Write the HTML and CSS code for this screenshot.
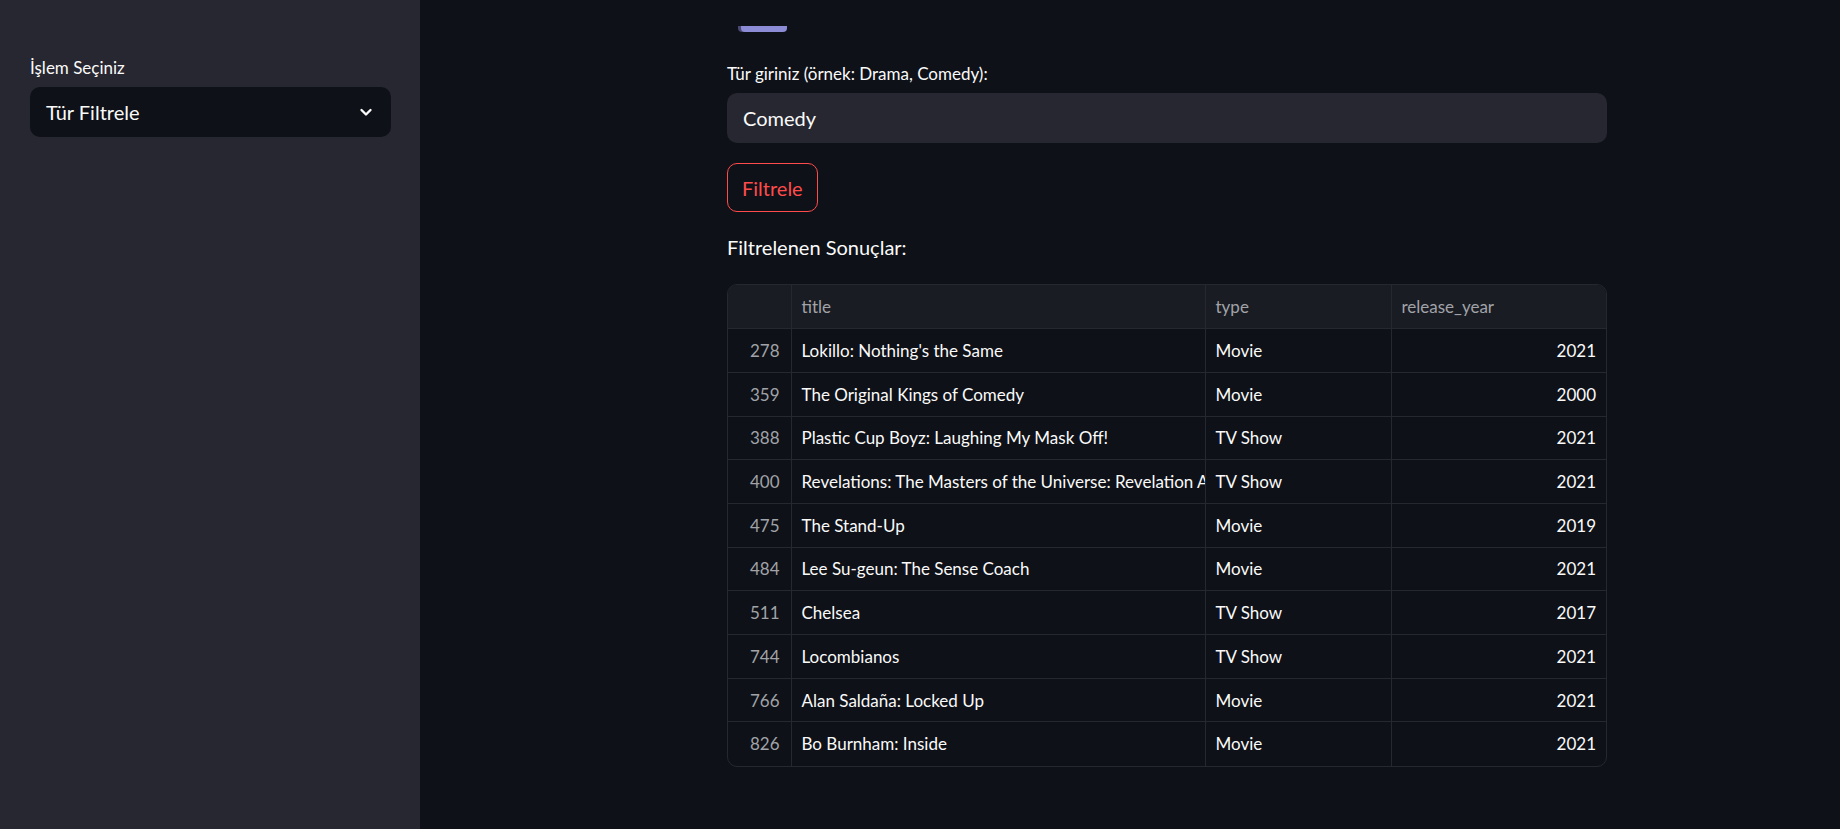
FILE: index.html
```html
<!DOCTYPE html>
<html lang="tr">
<head>
<meta charset="utf-8">
<title>Filtre</title>
<link rel="stylesheet" href="styles.css">
</head>
<body>
<div class="app">
  <aside class="sidebar">
    <label class="label">İşlem Seçiniz</label>
    <div class="select">
      <span>Tür Filtrele</span>
      <svg class="chev" width="14" height="14" viewBox="0 0 14 14"><polyline points="2.5,5 7,9.5 11.5,5" fill="none" stroke="#fafafa" stroke-width="2.4" stroke-linecap="round" stroke-linejoin="round"/></svg>
    </div>
  </aside>
  <main class="main">
    <div class="content">
      <div class="topbar"></div>
      <label class="label field-label">Tür giriniz (örnek: Drama, Comedy):</label>
      <div class="input">Comedy</div>
      <button class="btn">Filtrele</button>
      <p class="subhead">Filtrelenen Sonuçlar:</p>
      <div class="table-wrap">
        <table class="grid">
          <colgroup><col class="c-idx"><col class="c-title"><col class="c-type"><col class="c-year"></colgroup>
          <thead>
            <tr><th></th><th>title</th><th>type</th><th>release_year</th></tr>
          </thead>
          <tbody>
            <tr><td class="idx">278</td><td>Lokillo: Nothing's the Same</td><td>Movie</td><td class="num">2021</td></tr>
            <tr><td class="idx">359</td><td>The Original Kings of Comedy</td><td>Movie</td><td class="num">2000</td></tr>
            <tr><td class="idx">388</td><td>Plastic Cup Boyz: Laughing My Mask Off!</td><td>TV Show</td><td class="num">2021</td></tr>
            <tr><td class="idx">400</td><td><div class="clip">Revelations: The Masters of the Universe: Revelation Aftershow</div></td><td>TV Show</td><td class="num">2021</td></tr>
            <tr><td class="idx">475</td><td>The Stand-Up</td><td>Movie</td><td class="num">2019</td></tr>
            <tr><td class="idx">484</td><td>Lee Su-geun: The Sense Coach</td><td>Movie</td><td class="num">2021</td></tr>
            <tr><td class="idx">511</td><td>Chelsea</td><td>TV Show</td><td class="num">2017</td></tr>
            <tr><td class="idx">744</td><td>Locombianos</td><td>TV Show</td><td class="num">2021</td></tr>
            <tr><td class="idx">766</td><td>Alan Saldaña: Locked Up</td><td>Movie</td><td class="num">2021</td></tr>
            <tr><td class="idx">826</td><td>Bo Burnham: Inside</td><td>Movie</td><td class="num">2021</td></tr>
          </tbody>
        </table>
      </div>
    </div>
  </main>
</div>
</body>
</html>
```

FILE: styles.css
```css
* { box-sizing: border-box; }
html, body { margin: 0; padding: 0; height: 100%; }
body {
  background: #0e1117;
  color: #fafafa;
  font-family: "Lato", "Noto Sans", sans-serif;
  overflow: hidden;
}
.app { display: flex; height: 829px; }
.sidebar {
  width: 420px;
  flex: none;
  background: #262730;
  padding: 56px 29px 0 30px;
  display: flex;
  flex-direction: column;
}
.label {
  display: block;
  font-size: 17px;
  line-height: 24px;
  color: #fafafa;
}
.select {
  margin-top: 7px;
  height: 50px;
  background: #0e1117;
  border-radius: 10px;
  display: flex;
  align-items: center;
  justify-content: space-between;
  padding: 0 18px 0 16px;
  font-size: 20px;
}
.chev { display: block; }
.main { flex: 1; }
.content {
  width: 880px;
  margin-left: 307px;
  display: flex;
  flex-direction: column;
  align-items: flex-start;
}
.topbar {
  margin-left: 14px;
  width: 46px;
  height: 6px;
  margin-top: 26px;
  background: #8b8bd6;
  border-radius: 0 0 4px 4px;
  box-shadow: -3px 0 0 #4a4870;
}
.field-label { margin-top: 30px; }
.input {
  margin-top: 7px;
  width: 100%;
  height: 50px;
  background: #262730;
  border-radius: 10px;
  display: flex;
  align-items: center;
  padding-left: 16px;
  font-size: 20px;
}
.btn {
  margin-top: 20px;
  height: 49px;
  padding: 0 14px;
  background: #0e1117;
  border: 1px solid #ff4b4b;
  border-radius: 10px;
  color: #ff4b4b;
  font-family: inherit;
  font-size: 20px;
}
.subhead {
  margin: 20px 0 0;
  font-size: 20px;
  line-height: 30px;
}
.table-wrap {
  margin-top: 22px;
  width: 100%;
  border: 1px solid #26282f;
  border-radius: 10px;
  overflow: hidden;
}
.grid {
  width: 100%;
  border-collapse: collapse;
  table-layout: fixed;
  font-size: 17px;
}
.c-idx { width: 63px; }
.c-title { width: 414px; }
.c-type { width: 186px; }
.grid th, .grid td {
  height: 43.7px;
  padding: 0 10px 0 10px;
  border-right: 1px solid #26282f;
  border-bottom: 1px solid #26282f;
  white-space: nowrap;
  overflow: hidden;
  text-align: left;
  font-weight: normal;
}
.clip { overflow: hidden; white-space: nowrap; margin-right: -10px; }
.grid th:last-child, .grid td:last-child { border-right: none; }
.grid tbody tr:last-child td { border-bottom: none; }
.grid th { background: #1a1c24; color: #a1a3a8; }
.grid td.idx { text-align: right; color: #a1a3a8; padding-right: 11px; }
.grid td.num { text-align: right; padding-right: 10px; }
```
